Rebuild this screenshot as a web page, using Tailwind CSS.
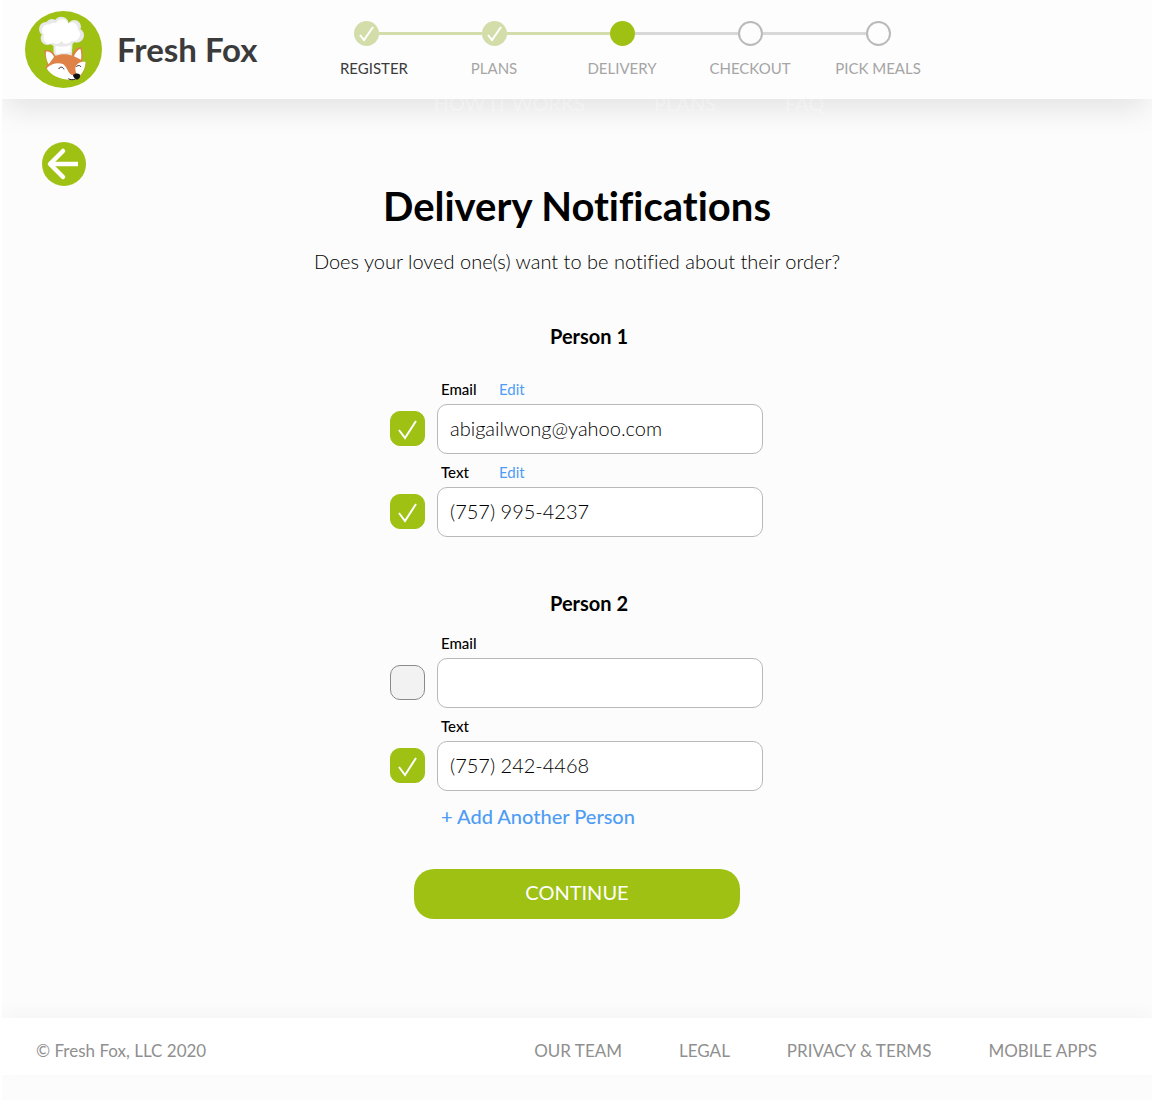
<!DOCTYPE html>
<html lang="en">
<head>
    <meta charset="UTF-8">
    <meta name="viewport" content="width=device-width, initial-scale=1.0">
    <title>Fresh Fox - Delivery Notifications</title>
    <script src="https://cdn.jsdelivr.net/npm/@tailwindcss/browser@4"></script>
</head>
<body class="min-h-screen border-l-2 border-white bg-[#fcfcfc] font-[Lato,sans-serif] text-black [font-variant-ligatures:none]">
    <header class="relative z-10 -ml-0.5 flex h-[99px] bg-[#fdfdfd] shadow-[0_15px_30px_-5px_rgba(0,0,0,0.1)]">
        <a href="#" class="flex w-[302px] shrink-0 items-center gap-[15px] pl-[25px]">
            <svg class="size-[77px]" viewBox="15 18 231 231" aria-hidden="true">
                <circle cx="130.500" cy="133.500" r="115.500" fill="#9ec114"/>
                <!-- chef hat -->
                <g fill="#e9e9e9">
                    <circle cx="78" cy="72" r="21"/>
                    <circle cx="96" cy="62" r="20"/>
                    <circle cx="124" cy="57" r="22"/>
                    <circle cx="163" cy="65" r="20"/>
                    <circle cx="170" cy="91" r="22"/>
                    <circle cx="82" cy="100" r="20"/>
                    <circle cx="104" cy="102" r="20"/>
                    <circle cx="146" cy="98" r="22"/>
                    <path d="M80 62 H165 V108 H80 Z"/>
                    <path d="M100 112 H158 L155 152 H101 Z"/>
                </g>
                <g fill="#fff">
                    <circle cx="84" cy="76" r="18"/>
                    <circle cx="101" cy="70" r="17"/>
                    <circle cx="126" cy="62" r="20"/>
                    <circle cx="155" cy="70" r="18"/>
                    <circle cx="160" cy="88" r="20"/>
                    <circle cx="88" cy="98" r="18"/>
                    <circle cx="110" cy="100" r="17"/>
                    <circle cx="138" cy="96" r="20"/>
                    <path d="M90 70 H155 V104 H90 Z"/>
                    <path d="M106 122 C120 127 138 126 152 120 L151 142 L108 146 Z"/>
                </g>
                <!-- fox -->
                <path d="M74 136 C86 132 100 140 107 153 C122 146 140 146 155 152 C160 138 172 126 184 126 C188 142 190 158 186 170 C190 172 196 173 199 170 C198 184 190 200 176 222 C152 230 110 216 92 194 C84 194 78 192 76 188 C80 184 82 178 82 172 C76 160 72 148 74 136 Z" fill="#df8247"/>
                <path d="M78 140 C88 138 98 146 102 156 L86 178 C80 166 76 154 78 140 Z M181 131 C184 142 185 154 183 164 L162 154 C166 144 172 134 181 131 Z" fill="#fff"/>
                <path d="M80 190 C94 174 116 172 130 178 C144 188 142 208 160 211 L168 222 C140 230 96 218 80 190 Z M197 171 C182 168 168 176 166 190 C166 196 167 202 170 208 L178 214 C190 202 196 188 197 171 Z" fill="#fff"/>
                <path d="M159 211 C164 205 174 204 180 209 C182 216 177 222 171 224 C165 222 160 217 159 211 Z" fill="#111"/>
                <path d="M116 192 C120 184 129 185 132 193 M169 186 C172 180 180 180 183 186 M145 221 C151 225 160 225 166 222" fill="none" stroke="#222" stroke-width="3"/>
            </svg>
            <span class="text-[33px] font-bold text-[#3b3b3c]">Fresh Fox</span>
        </a>
        <ol class="flex pt-[21px] text-center text-[15px] leading-5 text-[#a5a5a5]">
            <li class="w-32">
                <div class="flex items-center">
                    <span class="flex-1"></span>
                    <svg class="size-[25px]" viewBox="0 0 25 25" aria-hidden="true"><circle cx="12.500" cy="12.500" r="12.500" fill="#d2dda9"/><path d="M6 14 L10 19 L19 6" fill="none" stroke="#fff" stroke-width="2"/></svg>
                    <span class="h-[3px] flex-1 bg-[#d2dda9]"></span>
                </div>
                <p class="mt-3 pl-4 text-[#3b3b3c]">REGISTER</p>
            </li>
            <li class="w-32">
                <div class="flex items-center">
                    <span class="h-[3px] flex-1 bg-[#d2dda9]"></span>
                    <svg class="size-[25px]" viewBox="0 0 25 25" aria-hidden="true"><circle cx="12.500" cy="12.500" r="12.500" fill="#d2dda9"/><path d="M6 14 L10 19 L19 6" fill="none" stroke="#fff" stroke-width="2"/></svg>
                    <span class="h-[3px] flex-1 bg-[#d2dda9]"></span>
                </div>
                <p class="mt-3">PLANS</p>
            </li>
            <li class="w-32" aria-current="step">
                <div class="flex items-center">
                    <span class="h-[3px] flex-1 bg-[#d2dda9]"></span>
                    <span class="size-[25px] rounded-full bg-[#9ec114]"></span>
                    <span class="h-[3px] flex-1 bg-[#d8d8d8]"></span>
                </div>
                <p class="mt-3">DELIVERY</p>
            </li>
            <li class="w-32">
                <div class="flex items-center">
                    <span class="h-[3px] flex-1 bg-[#d8d8d8]"></span>
                    <span class="size-[25px] rounded-full border-2 border-[#b9b9b9]"></span>
                    <span class="h-[3px] flex-1 bg-[#d8d8d8]"></span>
                </div>
                <p class="mt-3">CHECKOUT</p>
            </li>
            <li class="w-32">
                <div class="flex items-center">
                    <span class="h-[3px] flex-1 bg-[#d8d8d8]"></span>
                    <span class="size-[25px] rounded-full border-2 border-[#b9b9b9]"></span>
                    <span class="flex-1"></span>
                </div>
                <p class="mt-3">PICK MEALS</p>
            </li>
        </ol>
    </header>

    <!-- site menu, tucked under the header -->
    <nav class="relative z-20 -mt-2 flex h-[51px] justify-center gap-[69px] pl-[104px] text-[20px] leading-6 text-white/30">
        <a href="#">HOW IT WORKS</a>
        <a href="#">PLANS</a>
        <a href="#">FAQ</a>
    </nav>

    <main class="pb-[99px]">
        <button type="button" aria-label="Back" class="ml-10 flex size-11 items-center justify-center rounded-full bg-[#9ec114]">
            <svg class="size-11" viewBox="0 0 44 44" fill="none" stroke="#fff" stroke-width="4.500" stroke-linecap="round" stroke-linejoin="round" aria-hidden="true"><path d="M21 9 L8 22 L21 35"/><path d="M8 22 H36" stroke-linecap="butt"/></svg>
        </button>

        <h1 class="text-center text-[40px] leading-10 font-bold">Delivery Notifications</h1>
        <p class="mt-[23px] text-center text-[20px] leading-6 font-light">Does your loved one(s) want to be notified about their order?</p>

        <form class="mx-auto mt-[51px] w-[374px]">
            <h2 class="pl-6 text-center text-[20px] leading-6 font-bold">Person 1</h2>
            <div class="mt-[31px] grid grid-cols-[35px_326px] gap-x-3">
                <div class="col-start-2 mb-[5px] flex h-5 items-center pl-1 text-[15px]">
                    <label for="email1" class="w-[58px] font-medium">Email</label>
                    <a href="#" class="text-[#4e9cf5]">Edit</a>
                </div>
                <div class="mb-0.5 grid place-items-center">
                    <input type="checkbox" checked aria-label="Notify person 1 by email" class="peer size-[35px] appearance-none rounded-[10px] border border-[#8a8a8a] bg-[#f2f2f2] [grid-area:1/1] checked:border-[#9ec114] checked:bg-[#9ec114]">
                    <svg class="pointer-events-none invisible size-[35px] [grid-area:1/1] peer-checked:visible" viewBox="0 0 35 35" fill="none" stroke="#fff" stroke-width="2" aria-hidden="true"><path d="M9 19 L15 27 L26 10"/></svg>
                </div>
                <input type="email" id="email1" value="abigailwong@yahoo.com" class="h-[50px] w-full rounded-[10px] border border-[#b9b9b9] bg-white px-3 pb-0.5 text-[20px] font-light">

                <div class="col-start-2 mt-2 mb-[5px] flex h-5 items-center pl-1 text-[15px]">
                    <label for="text1" class="w-[58px] font-medium">Text</label>
                    <a href="#" class="text-[#4e9cf5]">Edit</a>
                </div>
                <div class="mb-0.5 grid place-items-center">
                    <input type="checkbox" checked aria-label="Notify person 1 by text" class="peer size-[35px] appearance-none rounded-[10px] border border-[#8a8a8a] bg-[#f2f2f2] [grid-area:1/1] checked:border-[#9ec114] checked:bg-[#9ec114]">
                    <svg class="pointer-events-none invisible size-[35px] [grid-area:1/1] peer-checked:visible" viewBox="0 0 35 35" fill="none" stroke="#fff" stroke-width="2" aria-hidden="true"><path d="M9 19 L15 27 L26 10"/></svg>
                </div>
                <input type="tel" id="text1" value="(757) 995-4237" class="h-[50px] w-full rounded-[10px] border border-[#b9b9b9] bg-white px-3 pb-0.5 text-[20px] font-light">
            </div>

            <h2 class="mt-[54px] pl-6 text-center text-[20px] leading-6 font-bold">Person 2</h2>
            <div class="mt-[18px] grid grid-cols-[35px_326px] gap-x-3">
                <div class="col-start-2 mb-[5px] flex h-5 items-center pl-1 text-[15px]">
                    <label for="email2" class="font-medium">Email</label>
                </div>
                <div class="mb-0.5 grid place-items-center">
                    <input type="checkbox" aria-label="Notify person 2 by email" class="peer size-[35px] appearance-none rounded-[10px] border border-[#8a8a8a] bg-[#f2f2f2] [grid-area:1/1] checked:border-[#9ec114] checked:bg-[#9ec114]">
                    <svg class="pointer-events-none invisible size-[35px] [grid-area:1/1] peer-checked:visible" viewBox="0 0 35 35" fill="none" stroke="#fff" stroke-width="2" aria-hidden="true"><path d="M9 19 L15 27 L26 10"/></svg>
                </div>
                <input type="email" id="email2" class="h-[50px] w-full rounded-[10px] border border-[#b9b9b9] bg-white px-3 pb-0.5 text-[20px] font-light">

                <div class="col-start-2 mt-2 mb-[5px] flex h-5 items-center pl-1 text-[15px]">
                    <label for="text2" class="font-medium">Text</label>
                </div>
                <div class="mb-0.5 grid place-items-center">
                    <input type="checkbox" checked aria-label="Notify person 2 by text" class="peer size-[35px] appearance-none rounded-[10px] border border-[#8a8a8a] bg-[#f2f2f2] [grid-area:1/1] checked:border-[#9ec114] checked:bg-[#9ec114]">
                    <svg class="pointer-events-none invisible size-[35px] [grid-area:1/1] peer-checked:visible" viewBox="0 0 35 35" fill="none" stroke="#fff" stroke-width="2" aria-hidden="true"><path d="M9 19 L15 27 L26 10"/></svg>
                </div>
                <input type="tel" id="text2" value="(757) 242-4468" class="h-[50px] w-full rounded-[10px] border border-[#b9b9b9] bg-white px-3 pb-0.5 text-[20px] font-light">
            </div>

            <button type="button" class="mt-[13px] ml-[51px] block text-[20px] leading-6 font-medium text-[#4e9cf5]">+ Add Another Person</button>
            <button type="submit" class="mx-auto mt-[41px] block h-[50px] w-[326px] rounded-[20px] bg-[#9ec114] pb-1 text-[20px] text-white">CONTINUE</button>
        </form>
    </main>

    <footer class="flex h-[57px] items-center justify-between bg-white pt-2 pr-[55px] pl-[34px] text-[17px] text-[#8f8f8f] shadow-[0_-5px_20px_rgba(0,0,0,0.03)]">
        <p>© Fresh Fox, LLC 2020</p>
        <nav class="flex gap-[57px]">
            <a href="#">OUR TEAM</a>
            <a href="#">LEGAL</a>
            <a href="#">PRIVACY &amp; TERMS</a>
            <a href="#">MOBILE APPS</a>
        </nav>
    </footer>
</body>
</html>
